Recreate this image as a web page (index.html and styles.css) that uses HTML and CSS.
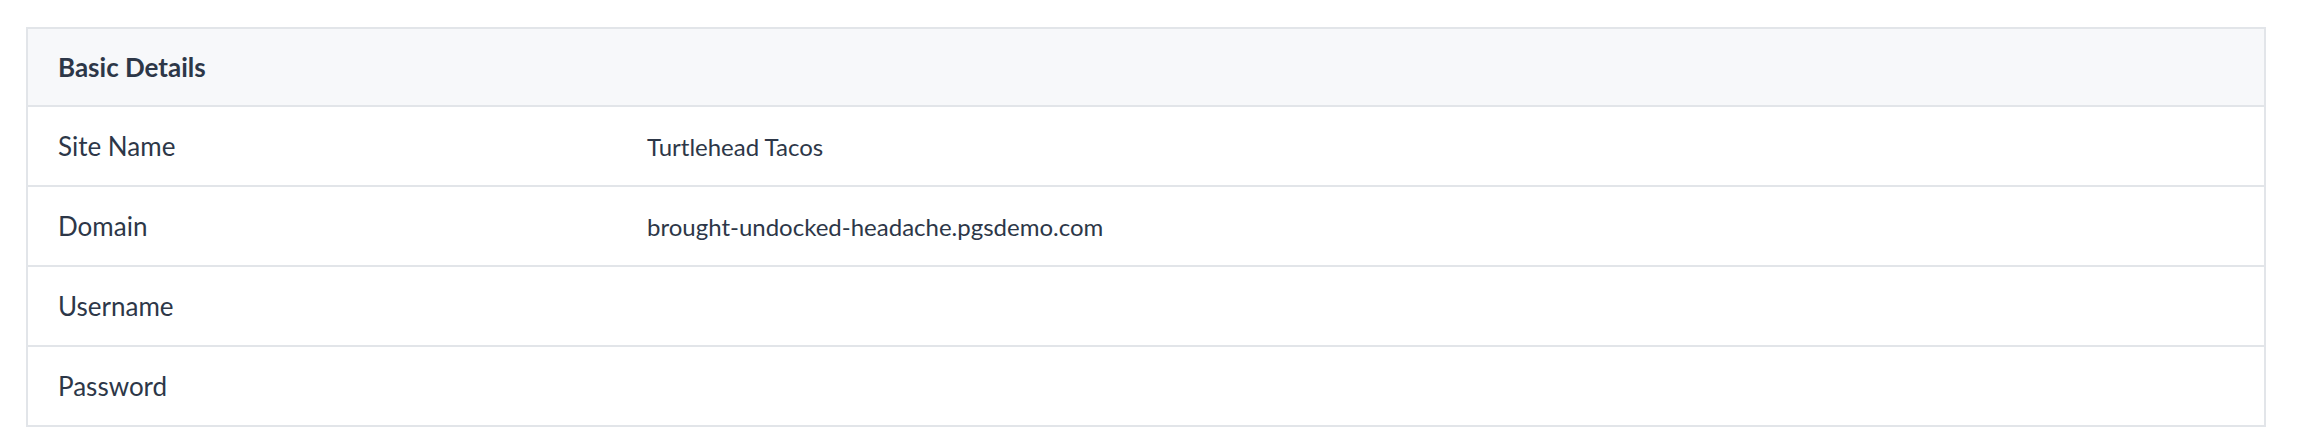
FILE: index.html
```html
<!DOCTYPE html>
<html>
<head>
<meta charset="utf-8">
<link rel="stylesheet" href="styles.css">
</head>
<body>
<div class="page">
  <div class="card">
    <div class="card-head">Basic Details</div>
    <div class="row"><div class="label">Site Name</div><div class="value">Turtlehead Tacos</div></div>
    <div class="row"><div class="label">Domain</div><div class="value">brought-undocked-headache.pgsdemo.com</div></div>
    <div class="row"><div class="label">Username</div><div class="value"></div></div>
    <div class="row"><div class="label">Password</div><div class="value"></div></div>
  </div>
</div>
</body>
</html>
```
FILE: styles.css
```css
html, body { margin: 0; padding: 0; background: #fff; }
body { font-family: Lato, "Noto Sans", sans-serif; color: #2d3748; }
.page { padding: 27px 34px 0 26px; }
.card { border: 2px solid #e2e5e9; }
.card-head {
  height: 76px;
  display: flex;
  align-items: center;
  padding: 0 30px;
  background: #f7f8fa;
  font-weight: 700;
  font-size: 26px;
}
.row {
  display: grid;
  grid-template-columns: 589px 1fr;
  height: 78px;
  align-items: center;
  border-top: 2px solid #e2e5e9;
  padding-left: 30px;
}
.label { font-size: 26px; }
.value { font-size: 24px; }
```
